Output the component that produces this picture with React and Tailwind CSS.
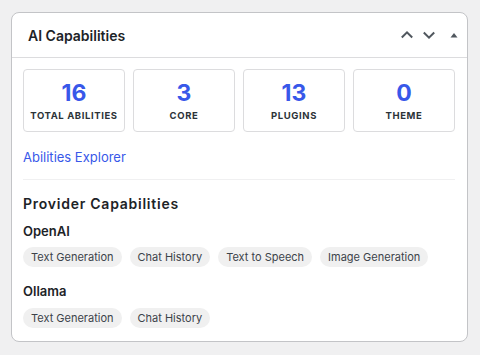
import React from "react";

const Chip = ({ children }) => (
  <span className="inline-flex h-[20px] items-center rounded-full bg-[#f0f0f0] px-[8px] text-[11px] text-[#3c434a]">
    {children}
  </span>
);

const Stat = ({ n, label }) => (
  <div className="flex h-[63px] flex-col items-center justify-center rounded-[4px] border border-[#dcdcde] bg-white">
    <div className="text-[23px] font-bold leading-[26px] text-[#3858e9]">{n}</div>
    <div className="mt-[4px] text-[9.5px] font-bold uppercase leading-[12px] tracking-[0.6px] text-[#2c3338]">{label}</div>
  </div>
);

export default function App() {
  return (
    <div className="min-h-[355px] bg-[#f0f0f1] pl-[11px] pt-[12px]" style={{ fontFamily: "Inter, 'Liberation Sans', sans-serif" }}>
      <div className="w-[457px] rounded-[8px] border border-[#c3c4c7] bg-white">
        <div className="flex h-[45px] items-center justify-between border-b border-[#dcdcde] pl-[16px] pr-[8px]">
          <h2 className="text-[14px] font-semibold text-[#1d2327]">AI Capabilities</h2>
          <div className="flex items-center text-[#50575e]">
            <svg width="12" height="12" viewBox="0 0 12 12" fill="none" stroke="currentColor" strokeWidth="2"><path d="M0.8 8.5 6 3.3l5.2 5.2" /></svg>
            <svg width="12" height="12" viewBox="0 0 12 12" fill="none" stroke="currentColor" strokeWidth="2" className="ml-[10px]"><path d="M0.8 3.5 6 8.7l5.2-5.2" /></svg>
            <svg width="10" height="10" viewBox="0 0 10 10" className="ml-[14px]"><path d="M1.5 7.5 5 3l3.5 4.5z" fill="currentColor" /></svg>
          </div>
        </div>
        <div className="pb-[13px] pl-[11px] pr-[12px] pt-[11px]">
          <div className="grid grid-cols-4 gap-[8px]">
            <Stat n="16" label="Total Abilities" />
            <Stat n="3" label="Core" />
            <Stat n="13" label="Plugins" />
            <Stat n="0" label="Theme" />
          </div>
          <a className="mt-[17px] block text-[13px] leading-[16px] text-[#3858e9]">Abilities Explorer</a>
          <div className="mt-[14px] border-t border-[#f0f0f1]" />
          <h3 className="mt-[15px] text-[14px] font-semibold leading-[18px] tracking-[0.75px] text-[#1d2327]">Provider Capabilities</h3>
          <div className="mt-[10px] text-[13px] font-semibold leading-[16px] text-[#1d2327]">OpenAI</div>
          <div className="mt-[8px] flex flex-wrap gap-[8px]">
            <Chip>Text Generation</Chip>
            <Chip>Chat History</Chip>
            <Chip>Text to Speech</Chip>
            <Chip>Image Generation</Chip>
          </div>
          <div className="mt-[16px] text-[13px] font-semibold leading-[16px] text-[#1d2327]">Ollama</div>
          <div className="mt-[9px] flex flex-wrap gap-[8px]">
            <Chip>Text Generation</Chip>
            <Chip>Chat History</Chip>
          </div>
        </div>
      </div>
    </div>
  );
}
